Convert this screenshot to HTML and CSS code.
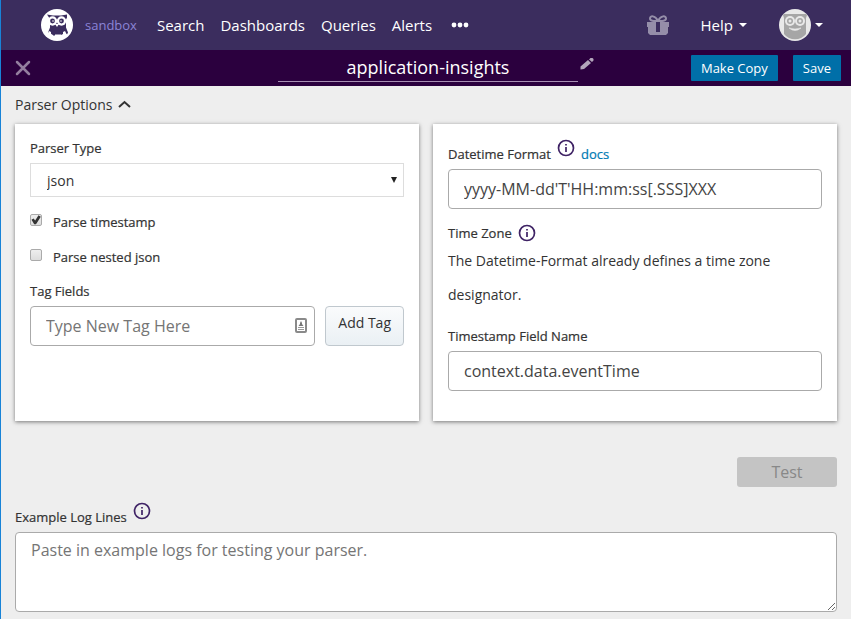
FILE: index.html
```html
<!DOCTYPE html>
<html lang="en">
<head>
<meta charset="utf-8">
<meta name="viewport" content="width=device-width, initial-scale=1">
<title>application-insights</title>
<link rel="stylesheet" href="styles.css">
</head>
<body>
<svg class="defs" aria-hidden="true">
  <symbol id="info" viewBox="0 0 18 18">
    <circle cx="9" cy="9" r="7.500" fill="none" stroke="#3f2365" stroke-width="1.700"/>
    <path d="M9 5v1.500M9 8v5" stroke="#3f2365" stroke-width="1.700" fill="none"/>
  </symbol>
</svg>

<header class="topbar">
  <a class="logo" href="#" aria-label="Home">
    <svg width="32" height="32" viewBox="0 0 32 32">
      <circle cx="16" cy="16" r="16" fill="#fff"/>
      <path d="M6 5.500l6 1h8l6-1v3l-1 2v8l2 5-1 2-2-1-1 2h-3v-1h-6v1h-3l-1-2-2 1-1-2 2-5v-8l-1-2z" fill="#3b2d5e"/>
      <circle cx="11.500" cy="12" r="4.700" fill="#fff"/>
      <circle cx="20.500" cy="12" r="4.700" fill="#fff"/>
      <circle cx="11.500" cy="12" r="2.400" fill="#3b2d5e"/>
      <circle cx="20.500" cy="12" r="2.400" fill="#3b2d5e"/>
      <circle cx="12" cy="12" r=".8" fill="#fff"/>
      <circle cx="20" cy="12" r=".8" fill="#fff"/>
      <path d="M14 15h4l-2 3z" fill="#fff"/>
      <path d="M8 22l2 1v2l2 1v2H8v-2H6zM24 22l-2 1v2l-2 1v2h4v-2h2z" fill="#fff"/>
    </svg>
  </a>
  <a class="repo" href="#">sandbox</a>
  <nav class="nav">
    <a href="#">Search</a>
    <a href="#">Dashboards</a>
    <a href="#">Queries</a>
    <a href="#">Alerts</a>
    <a class="more" href="#" aria-label="More">
      <svg width="18" height="6" viewBox="0 0 18 6" fill="#fff"><circle cx="3" cy="3" r="2.400"/><circle cx="9" cy="3" r="2.400"/><circle cx="15" cy="3" r="2.400"/></svg>
    </a>
  </nav>
  <div class="account">
    <a class="gift" href="#" aria-label="What's new">
      <svg width="22" height="20" viewBox="0 0 22 20">
        <path d="M0 7h22v5h-1v6l-2 2H3l-2-2v-6H0z" fill="#958ea9"/>
        <path d="M11 6C8 6 3 6.500 3 3.500S8 0 11 6C14 0 19 .5 19 3.500S14 6 11 6z" fill="none" stroke="#958ea9" stroke-width="2"/>
        <path d="M9 7h4v10H9z" fill="#3b2d5e"/>
      </svg>
    </a>
    <a class="help" href="#">Help <span class="caret"></span></a>
    <a class="user" href="#" aria-label="Account">
      <svg width="32" height="32" viewBox="0 0 32 32">
        <circle cx="16" cy="16" r="16" fill="#e8e8e8"/>
        <path d="M5 5h22l1 1-1 3v16a14 14 0 0 1-22 0V9L4 6z" fill="#a6a6a6"/>
        <circle cx="11" cy="12" r="5" fill="#e8e8e8"/>
        <circle cx="21" cy="12" r="5" fill="#e8e8e8"/>
        <circle cx="11" cy="12" r="3" fill="#a6a6a6"/><circle cx="21" cy="12" r="3" fill="#a6a6a6"/>
        <circle cx="11" cy="12" r="1.500" fill="#e8e8e8"/><circle cx="21" cy="12" r="1.500" fill="#e8e8e8"/>
        <path d="M10 19q6 5 12 0q-6 2-12 0z" fill="#e8e8e8" stroke="#e8e8e8" stroke-width=".6"/>
      </svg>
      <span class="caret"></span>
    </a>
  </div>
</header>

<div class="titlebar">
  <button class="close" type="button" aria-label="Close">
    <svg width="16" height="16" viewBox="0 0 16 16"><path d="M2 2l12 12M14 2L2 14" stroke="#947f9f" stroke-width="2.500" stroke-linecap="round"/></svg>
  </button>
  <div class="name">
    <input type="text" value="application-insights" aria-label="Parser name">
    <svg width="14" height="12" viewBox="0 0 14 12" fill="#b3a5bb"><path d="M.5 8.500L8 2l3 3-7 6-3.500.5zM9 1.400L10.500 0h2l1 1v1.500L12 4z"/></svg>
  </div>
  <div class="actions">
    <button type="button">Make Copy</button>
    <button type="button">Save</button>
  </div>
</div>

<main>
  <button class="toggle" type="button" aria-expanded="true">Parser Options
    <svg width="13" height="8" viewBox="0 0 13 8"><path d="M1 7l5.500-5L12 7" fill="none" stroke="#333" stroke-width="2"/></svg>
  </button>

  <div class="cards">
    <section class="card">
      <label class="label" for="type">Parser Type</label>
      <div class="select">
        <select id="type"><option>json</option></select>
        <svg width="6" height="6" viewBox="0 0 6 6"><path d="M0 0h6L3 6z" fill="#222"/></svg>
      </div>
      <label class="check"><input type="checkbox" checked><span>Parse timestamp</span></label>
      <label class="check"><input type="checkbox"><span>Parse nested json</span></label>
      <label class="label tags" for="tag">Tag Fields</label>
      <div class="tagrow">
        <div class="tagbox">
          <input class="field" id="tag" type="text" placeholder="Type New Tag Here">
          <svg width="12" height="15" viewBox="0 0 12 15"><rect x="1" y="1" width="10" height="13" rx="1" fill="#fff" stroke="#8a8a8a" stroke-width="2"/><path d="M6 3l1 2v1l1.500 2h-5L5 6V5z" fill="#777"/><path d="M3 9h6v1H3zM3 11h6v1H3z" fill="#999"/></svg>
        </div>
        <button class="add" type="button">Add Tag</button>
      </div>
    </section>

    <section class="card">
      <div class="heading raised">
        <label class="label" for="format">Datetime Format</label>
        <svg class="info" width="18" height="18"><use href="#info"/></svg>
        <a class="docs" href="#">docs</a>
      </div>
      <input class="field" id="format" type="text" value="yyyy-MM-dd'T'HH:mm:ss[.SSS]XXX">
      <div class="heading zone">
        <span class="label">Time Zone</span>
        <svg class="info" width="18" height="18"><use href="#info"/></svg>
      </div>
      <p class="note">The Datetime-Format already defines a time zone designator.</p>
      <label class="label stamp" for="stamp">Timestamp Field Name</label>
      <input class="field" id="stamp" type="text" value="context.data.eventTime">
    </section>
  </div>

  <div class="testrow"><button class="test" type="button" disabled>Test</button></div>

  <div class="heading raised">
    <label class="label" for="logs">Example Log Lines</label>
    <svg class="info" width="18" height="18"><use href="#info"/></svg>
  </div>
  <textarea class="field logs" id="logs" placeholder="Paste in example logs for testing your parser."></textarea>
</main>
</body>
</html>
```
FILE: styles.css
```css
* { box-sizing: border-box; }

body {
  margin: 0;
  min-height: 100vh;
  border-left: 1px solid #1883d7;
  background: #eee;
  color: #333;
  font-family: "Open Sans", sans-serif;
  font-size: 14px;
  overflow-x: hidden;
}

button, input, select, textarea { font: inherit; color: inherit; margin: 0; }
button { border: 0; cursor: pointer; }
a { color: inherit; text-decoration: none; }
svg { display: block; flex: none; }
.defs { position: absolute; width: 0; height: 0; }

.topbar {
  display: flex;
  align-items: center;
  height: 50px;
  padding: 0 28px 0 40px;
  background: #3b2d5e;
  color: #fff;
  font-size: 15px;
  font-weight: 500;
}
.repo { margin-left: 12px; color: #8b84d7; font-size: 13px; font-weight: 400; }
.nav { display: flex; align-items: center; gap: 16px; margin-left: 20px; }
.more { margin-left: 3px; }
.account { display: flex; align-items: center; margin-left: auto; }
.help { display: flex; align-items: center; gap: 6px; margin: 0 32px; }
.user { display: flex; align-items: center; gap: 4px; }
.caret { border: 4px solid transparent; border-top-color: #fff; border-bottom: 0; }

.titlebar {
  display: grid;
  grid-template-columns: 1fr 332px 1fr;
  align-items: center;
  height: 36px;
  padding: 0 10px 0 14px;
  background: #2b003e;
  color: #fff;
}
.close { justify-self: start; padding: 0; background: none; }
.name { display: flex; gap: 2px; padding-left: 16px; }
.name svg { margin-top: 4px; }
.name input {
  flex: 1;
  min-width: 0;
  height: 28px;
  padding: 0 0 2px;
  border: 0;
  border-bottom: 1px solid #a78fb3;
  background: none;
  font-size: 18px;
  text-align: center;
}
.actions { display: flex; justify-content: flex-end; gap: 15px; }
.actions button {
  height: 26px;
  padding: 0 10px;
  border-radius: 1px;
  background: #006fa8;
  font-size: 13px;
  font-weight: 500;
}

main { padding: 8px 14px; }
.toggle {
  display: flex;
  align-items: center;
  gap: 6px;
  height: 20px;
  padding: 0;
  background: none;
}
.cards { display: grid; grid-template-columns: 1fr 1fr; gap: 14px; margin-top: 10px; }
.card {
  min-height: 297px;
  padding: 15px;
  background: #fff;
  box-shadow: 0 1px 4px rgba(0, 0, 0, .5);
}
.label, .check, .docs {
  font-size: 13px;
  font-weight: 500;
  -webkit-text-stroke: .2px currentColor;
}
.label { display: block; line-height: 18px; }

.select { position: relative; margin-top: 6px; }
.select select {
  display: block;
  width: 100%;
  height: 34px;
  padding: 0 16px;
  border: 1px solid #ddd;
  border-radius: 0;
  background: #fff;
  appearance: none;
}
.select svg { position: absolute; right: 7px; top: 14px; pointer-events: none; }

.check { display: flex; gap: 11px; height: 20px; margin-top: 15px; line-height: 22px; }
.select + .check { margin-top: 14px; }
.check input {
  flex: none;
  width: 12px;
  height: 12px;
  margin-top: 3px;
  border: 1px solid #aaa;
  border-radius: 2px;
  background: linear-gradient(#eee, #ddd);
  appearance: none;
}
.check input:checked::before {
  content: "";
  display: block;
  height: 10px;
  background: #333;
  clip-path: polygon(5% 48%, 25% 35%, 42% 55%, 75% 3%, 98% 18%, 50% 92%, 32% 92%);
}
.tags { margin-top: 16px; }

.field {
  display: block;
  width: 100%;
  height: 40px;
  padding: 0 15px;
  border: 1px solid #aaa;
  border-radius: 4px;
  background: #fff;
  color: #444;
  font-size: 16px;
}
.field::placeholder { color: #757575; }
.tagrow { display: flex; gap: 10px; margin-top: 6px; }
.tagbox { position: relative; flex: 1; }
.tagbox svg { position: absolute; right: 8px; top: 12px; }
.add {
  height: 40px;
  padding: 0 12px 8px;
  border: 1px solid #c0c8ce;
  border-radius: 4px;
  background: linear-gradient(#fafbfc, #eaf0f4);
}

.heading { display: flex; align-items: center; gap: 6px; margin-bottom: 6px; }
.raised { align-items: flex-start; }
.raised .label, .raised .docs { padding-top: 6px; }
.docs { color: #007ab3; line-height: 18px; }
.zone { margin: 15px 0 2px; }
.note { margin: 0; line-height: 34px; }
.stamp { margin: 15px 0 6px; }

.testrow { display: flex; justify-content: flex-end; margin: 36px 0 15px; }
.test {
  width: 100px;
  height: 30px;
  border-radius: 3px;
  background: #c4c4c4;
  color: #888;
  font-size: 16px;
}
.logs { height: 80px; padding-top: 6px; resize: both; }
```
